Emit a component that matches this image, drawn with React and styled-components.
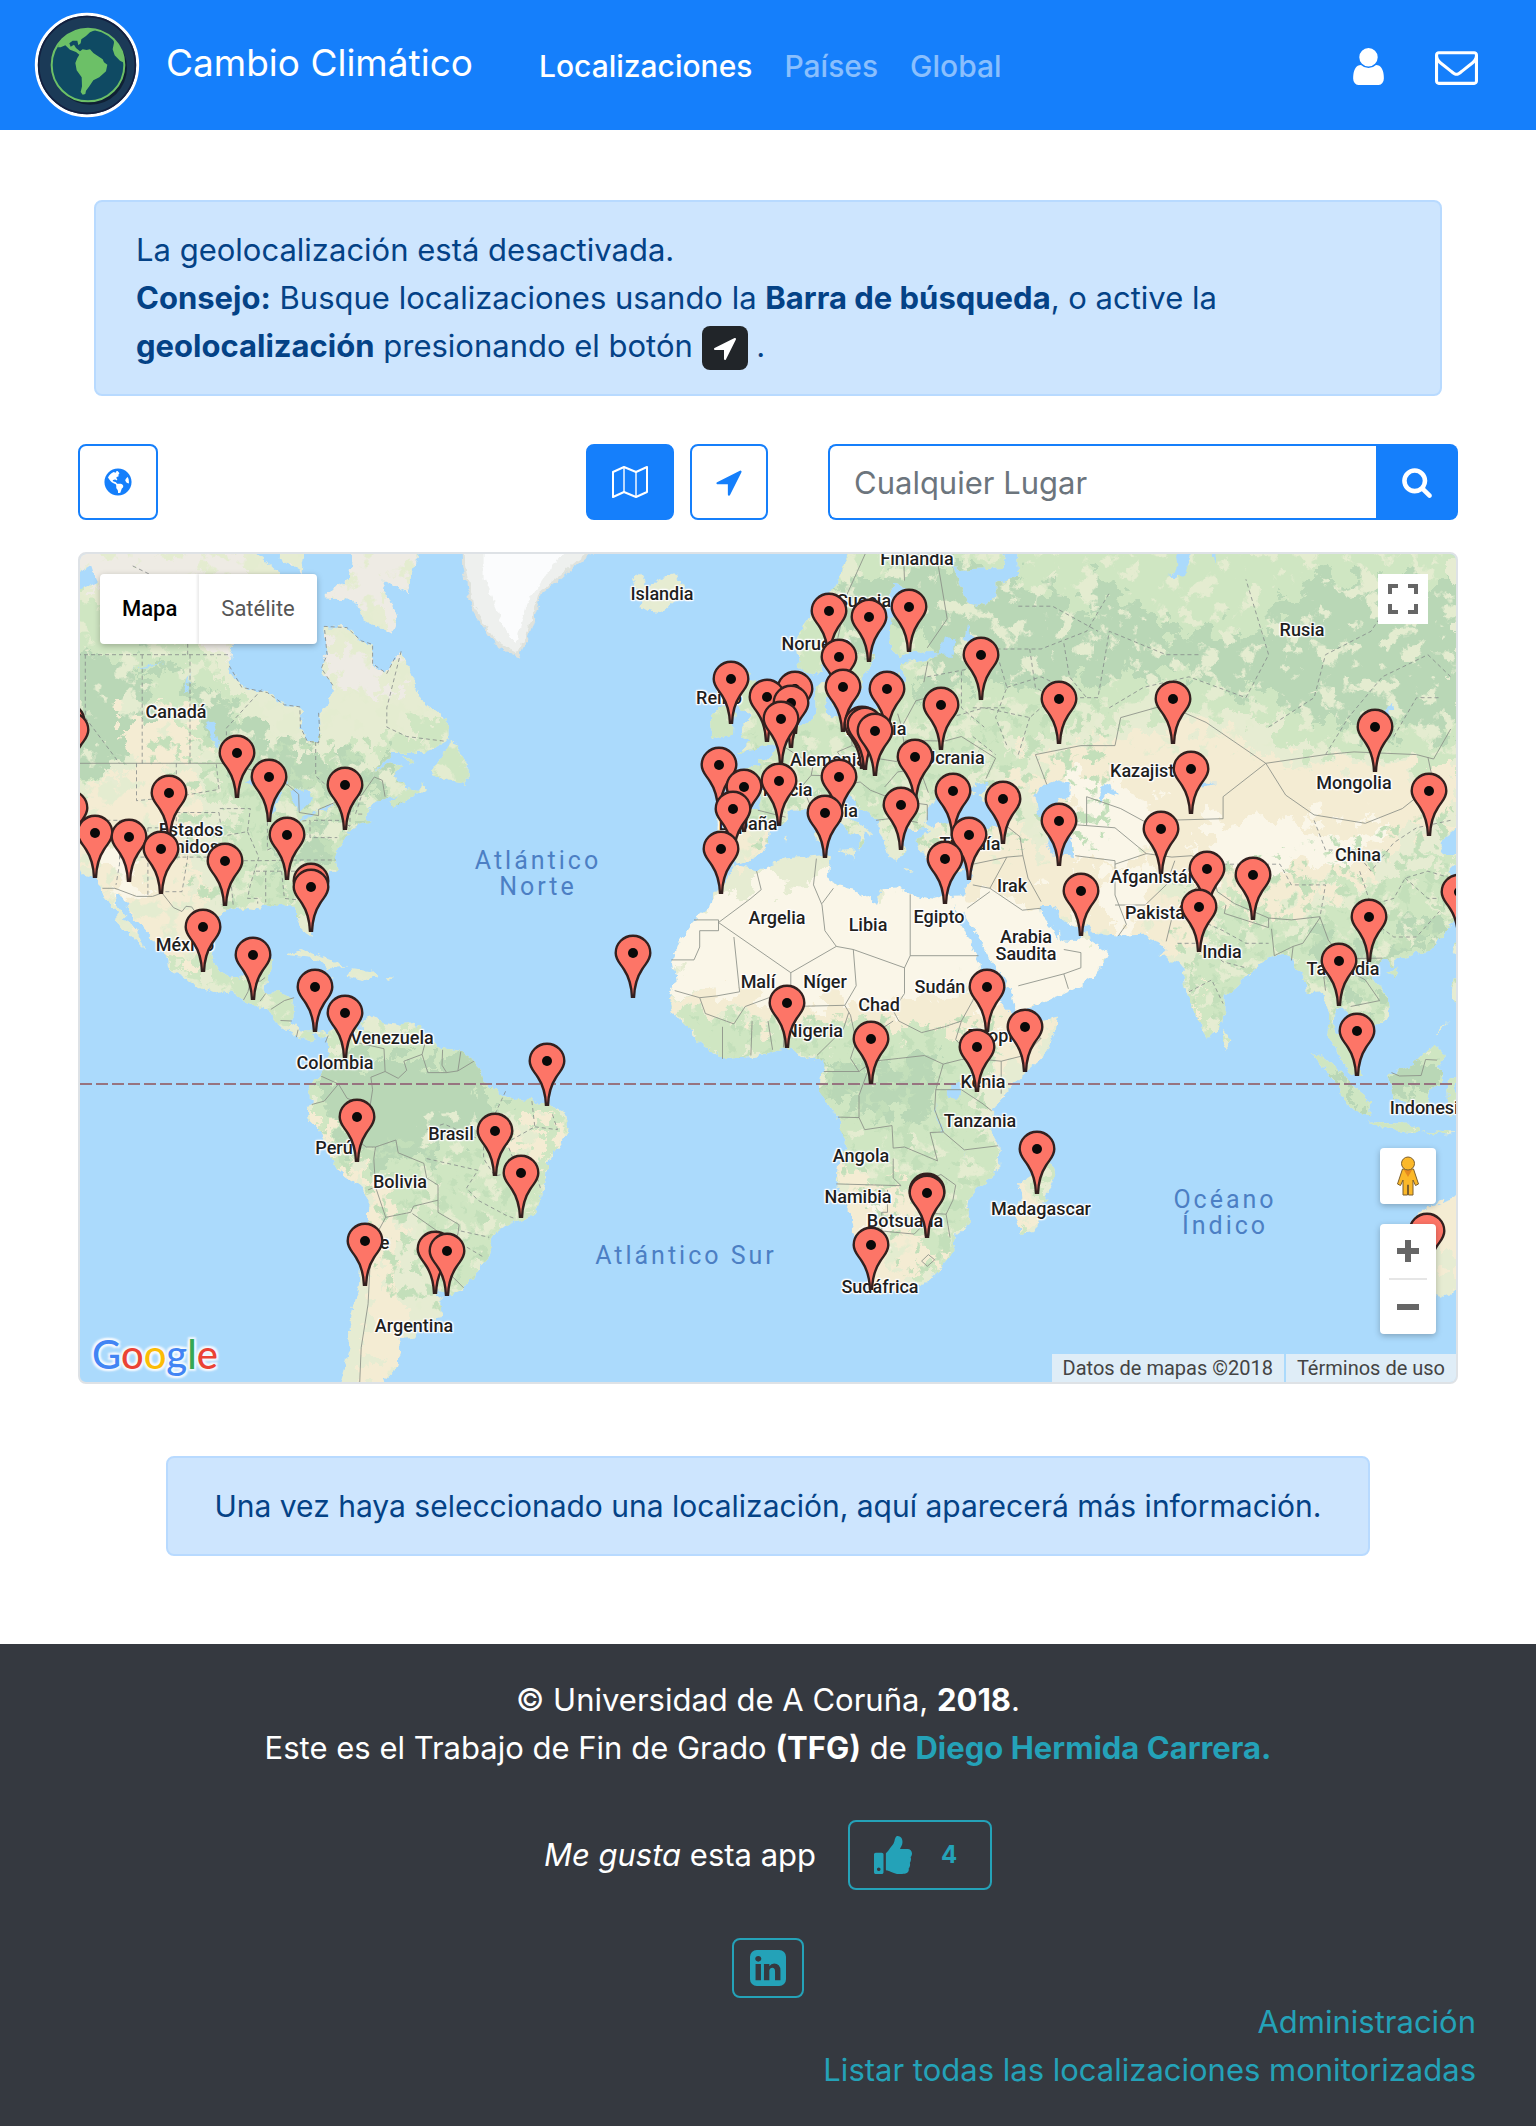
import React from "react";
import styled, { createGlobalStyle, css } from "styled-components";
import { FaGlobeAmericas, FaThumbsUp } from "react-icons/fa";

/* ---------- theme values ---------- */

const color = {
  primary: "#157ffb",
  info: "#24a2b8",
  dark: "#353940",
  ink: "#212529",
  alertBg: "#cde5fe",
  alertBorder: "#b8daff",
  alertText: "#044286",
  frame: "#dee2e6",
  muted: "#6c757d",
  water: "#abdafc",
};

const GlobalStyle = createGlobalStyle`
  *, *::before, *::after { box-sizing: border-box; }
  body {
    margin: 0;
    background: #fff;
    color: ${color.ink};
    font-family: Inter, "Liberation Sans", sans-serif;
    font-size: 31px;
    line-height: 48px;
  }
  button, input { font: inherit; }
  p { margin: 0; }
`;

/* ---------- icons ---------- */

const Glyph = styled.svg`
  display: block;
  flex: none;
  width: ${(p) => p.$size}px;
  height: ${(p) => p.$size}px;
  fill: currentColor;
`;

const Icon = ({ d, size }) => (
  <Glyph viewBox="0 0 1792 1792" $size={size} aria-hidden="true">
    <path d={d} />
  </Glyph>
);

const ICONS = {
  user: "M1536 1399q0 109-62.5 187t-150.5 78h-854q-88 0-150.5-78t-62.5-187q0-85 8.5-160.5t31.5-152 58.5-131 94-89 134.5-34.5q131 128 313 128t313-128q76 0 134.5 34.5t94 89 58.5 131 31.5 152 8.5 160.5zm-256-887q0 159-112.5 271.5t-271.5 112.5-271.5-112.5-112.5-271.5 112.5-271.5 271.5-112.5 271.5 112.5 112.5 271.5z",
  mail: "M1664 1504v-768q-32 36-69 66-268 206-426 338-51 43-83 67t-86.5 48.5-102.5 24.5h-2q-48 0-102.5-24.5t-86.5-48.5-83-67q-158-132-426-338-37-30-69-66v768q0 13 9.5 22.5t22.5 9.5h1472q13 0 22.5-9.5t9.5-22.5zm0-1051v-24.5l-.5-13-3-12.5-5.5-9-9-7.5-14-2.5h-1472q-13 0-22.5 9.5t-9.5 22.5q0 168 147 284 193 152 401 317 6 5 35 29.5t46 37.5 44.5 31.5 50.5 27.5 43 9h2q20 0 43-9t50.5-27.5 44.5-31.5 46-37.5 35-29.5q208-165 401-317 54-43 100.5-115.5t46.5-131.5zm128-37v1088q0 66-47 113t-113 47h-1472q-66 0-113-47t-47-113v-1088q0-66 47-113t113-47h1472q66 0 113 47t47 113z",
  arrow: "M1593 349l-640 1280q-17 35-57 35-5 0-15-2-22-5-35.5-22.5t-13.5-39.5v-576h-576q-22 0-39.5-13.5t-22.5-35.5 4-42 29-30l1280-640q13-7 29-7 27 0 45 19 15 14 18.5 34.5t-6.5 39.5z",
  search: "M1216 832q0-185-131.5-316.5t-316.5-131.5-316.5 131.5-131.5 316.5 131.5 316.5 316.5 131.5 316.5-131.5 131.5-316.5zm512 832q0 52-38 90t-90 38q-54 0-90-38l-343-342q-179 124-399 124-143 0-273.5-55.5t-225-150-150-225-55.5-273.5 55.5-273.5 150-225 225-150 273.5-55.5 273.5 55.5 225 150 150 225 55.5 273.5q0 220-124 399l343 343q37 37 37 90z",
  linkedin: "M365 1414h231v-694h-231v694zm246-908q-1-52-36-86t-93-34-94.5 34-36.5 86q0 51 35.5 85.5t92.5 34.5h1q59 0 95-34.5t36-85.5zm585 908h231v-398q0-154-73-233t-193-79q-136 0-209 117h2v-101h-231q3 66 0 694h231v-388q0-38 7-56 15-35 45-59.5t74-24.5q116 0 116 157v371zm468-998v960q0 119-84.5 203.5t-203.5 84.5h-960q-119 0-203.5-84.5t-84.5-203.5v-960q0-119 84.5-203.5t203.5-84.5h960q119 0 203.5 84.5t84.5 203.5z",
};

const LogoSvg = styled.svg`
  display: block;
  width: 106px;
  height: 106px;
`;

const Logo = () => (
  <LogoSvg viewBox="12 12 318 318" aria-hidden="true">
    <defs>
      <clipPath id="logo-globe"><circle cx="174" cy="171" r="109" /></clipPath>
    </defs>
    <circle cx="171" cy="171" r="152" fill="#1b3a57" stroke="#fff" strokeWidth="9" />
    <circle cx="171" cy="171" r="145" fill="none" stroke="#14203f" strokeWidth="5" />
    <circle cx="181" cy="180" r="110" fill="#0d1a2c" opacity="0.8" />
    <circle cx="174" cy="171" r="109" fill="#0f4a63" />
    <g clipPath="url(#logo-globe)" fill="#6cc067">
      <path d="M84 118L90 82L130 56L172 56L196 66L180 73L168 84L154 94L152 106L145 112L142 98L128 98L118 106L122 116L132 110L138 120L150 130L158 124L170 126L180 124L190 135L200 142L218 154L222 163L232 170L228 190L208 208L190 217L178 235L168 248L166 258L158 260L152 252L156 235L155 208L140 187L136 165L142 150L148 140L138 132L120 125L106 112L92 118Z" />
      <path d="M250 86L290 120L290 168L270 158L254 142L248 124L252 104Z" />
    </g>
    <circle cx="174" cy="171" r="109" fill="none" stroke="#6cc067" strokeWidth="6" />
  </LogoSvg>
);

const MapIconSvg = styled.svg`
  display: block;
  width: 38px;
  height: 32px;
`;

const MapIcon = () => (
  <MapIconSvg viewBox="0 0 38 32" fill="none" stroke="currentColor" strokeWidth="2" strokeLinejoin="round" aria-hidden="true">
    <path d="M2 6 L13 1 L25 6 L36 1 V26 L25 31 L13 26 L2 31 Z" />
    <path d="M13 1 V26 M25 6 V31" strokeWidth="1.4" />
  </MapIconSvg>
);

/* ---------- header ---------- */

const Header = styled.header`
  display: flex;
  align-items: center;
  height: 130px;
  padding: 0 58px 0 34px;
  background: ${color.primary};
  color: #fff;
`;

const Brand = styled.a`
  display: flex;
  align-items: center;
  gap: 26px;
  margin-right: 66px;
  color: inherit;
  font-size: 37px;
  line-height: 60px;
  text-decoration: none;

  span { padding-bottom: 4px; }
`;

const Nav = styled.nav`
  display: flex;
  flex: 1;
  gap: 32px;
  padding-top: 2px;
  font-size: 30px;
  font-weight: 500;
`;

const NavLink = styled.a`
  color: ${(p) => (p.$active ? "#fff" : "rgba(255, 255, 255, 0.5)")};
  text-decoration: none;
`;

const HeaderActions = styled.div`
  display: flex;
  align-items: center;
  gap: 45px;
  padding-top: 2px;
`;

const HeaderAction = styled.a`
  color: #fff;
`;

/* ---------- content ---------- */

const Main = styled.main`
  padding: 70px 78px 88px;
`;

const Alert = styled.div`
  margin: 0 16px 48px;
  padding: 24px 40px;
  border: 2px solid ${color.alertBorder};
  border-radius: 8px;
  background: ${color.alertBg};
  color: ${color.alertText};
  ${(p) => p.$narrow && css`
    margin: 72px 88px 0;
    font-size: 30px;
    text-align: center;
  `}
`;

const InlineBadge = styled.span`
  display: inline-flex;
  align-items: center;
  justify-content: center;
  width: 46px;
  height: 44px;
  border-radius: 8px;
  background: ${color.ink};
  color: #fff;
  vertical-align: bottom;
`;

const Toolbar = styled.div`
  display: grid;
  grid-template-columns: 1fr 1fr;
  margin-bottom: 32px;
`;

const ToolbarButtons = styled.div`
  display: flex;
  gap: 16px;
`;

const ToolButton = styled.button`
  display: flex;
  align-items: center;
  justify-content: center;
  width: ${(p) => p.$width}px;
  height: 76px;
  padding: 0;
  border: 2px solid ${color.primary};
  border-radius: 8px;
  background: ${(p) => (p.$filled ? color.primary : "#fff")};
  color: ${(p) => (p.$filled ? "#fff" : color.primary)};

  &:first-child { margin-right: auto; }
`;

const SearchForm = styled.form`
  display: flex;
  margin-left: 60px;
`;

const SearchInput = styled.input`
  flex: 1;
  min-width: 0;
  height: 76px;
  padding: 0 24px;
  border: 2px solid ${color.primary};
  border-right: 0;
  border-radius: 8px 0 0 8px;
  background: #fff;
  color: ${color.ink};

  &::placeholder { color: ${color.muted}; opacity: 1; }
`;

const SearchButton = styled.button`
  display: flex;
  align-items: center;
  justify-content: center;
  width: 82px;
  height: 76px;
  padding: 0;
  border: 0;
  border-radius: 0 8px 8px 0;
  background: ${color.primary};
  color: #fff;
`;

/* ---------- map geometry ---------- */

/* World-pixel window that the map shows. */
const VIEW = { left: 80, top: 554, width: 1376, height: 828 };

const project = (lon, lat) => {
  const y = Math.log(Math.tan(Math.PI / 4 + (lat * Math.PI) / 360));
  return [768 + 5.689 * lon, 1084 - 325.95 * y];
};

const trace = (text, closed) => {
  const points = text.trim().split(/\s+/).map((pair) => {
    const [x, y] = project(...pair.split(",").map(Number));
    return `${x.toFixed(1)} ${y.toFixed(1)}`;
  });
  return `M${points.join("L")}${closed ? "Z" : ""}`;
};
const shapes = (list) => list.map((t) => trace(t, true)).join("");
const lines = (list) => list.map((t) => trace(t, false)).join("");

const LAND = shapes([
  "-135,72 -96,72 -94,69 -86,66.5 -88,64 -93,62 -94.5,60 -94.7,58.8 -92.5,57 -88,56.5 -85,55.3 -82.3,55.1 -82.2,53 -81,51.5 -79,51.3 -78.8,52.5 -79,54.5 -77,55.7 -76.5,57.2 -78.5,58.8 -77.5,60 -78,62.4 -74,62.3 -71.5,61.2 -69.5,60.9 -69.5,59.2 -67,58.3 -65.5,59.8 -64.5,60.3 -62.5,58 -61.5,56.5 -60,55 -57.5,54.5 -56,52.8 -56,51.7 -59,50.6 -60.5,50.2 -66,50.2 -68,48.9 -70,47.2 -69,48 -66.5,49.1 -64.3,48.8 -65.5,47.8 -64.8,46.8 -63.5,45.9 -61.3,45.7 -60.6,47 -60,45.8 -63.5,44.6 -65.7,43.5 -66.2,44.4 -64.8,45.4 -67,44.9 -70,43.7 -70.8,42.5 -70,41.7 -72,41.2 -74,40.6 -74.2,39.5 -75.4,38 -76.2,36.9 -75.6,35.3 -77.5,34.3 -79,33.4 -81,32 -81.4,30.5 -80.6,28.3 -80.1,26.5 -80.5,25.2 -81.8,26 -82.8,27.8 -82.8,29.1 -84.2,30 -85.5,29.8 -88,30.3 -89.5,30.1 -89.3,29.1 -91.5,29.4 -94.5,29.5 -97.1,27.8 -97.4,25.8 -97.8,22.3 -96.5,19.6 -94.5,18.2 -91.8,18.5 -90.5,20.8 -87,21.5 -87.6,19.5 -88.3,18 -88.6,15.9 -86,15.9 -83.3,15 -83.6,12.5 -83.6,11 -82.2,9.2 -80,9.2 -78,9.4 -77.2,8.4 -78.3,8 -79.5,8.9 -80.3,7.5 -82.8,8.2 -83.7,8.7 -85.7,10 -87.5,12.8 -90,13.7 -92.3,14.5 -94.5,16.1 -96.6,15.7 -99.8,16.8 -102,18 -105,19.4 -105.5,20.6 -106,22.8 -109,25.6 -112,28.5 -113.2,31 -114.8,31.7 -114.6,30 -112.8,28 -111,26 -110,24 -109.5,23 -110.3,23.6 -112,25.3 -113.5,26.8 -115,27.8 -114.2,28.6 -116,30.5 -117.2,32.7 -118.5,34 -120.6,34.6 -122,37 -124,40 -130,50",
  "-77.2,8.6 -75.5,10.5 -73,11.3 -71.7,12.3 -71.4,10.8 -70,12 -68,10.8 -64.5,10.2 -62,10.7 -60.5,8.6 -57.5,6.3 -54,5.8 -51.7,4.2 -50.3,1.8 -50,0 -48.5,-1 -44.5,-2.6 -41.5,-2.9 -38.5,-3.7 -35.3,-5.2 -34.9,-8 -37,-11 -38.8,-13.5 -39.2,-17.5 -40.5,-21 -42,-22.9 -45,-23.5 -48.5,-26 -48.8,-28.5 -51,-31 -53.5,-34 -56,-34.9 -58.3,-34 -57.2,-35.5 -57.5,-38 -62,-38.9 -62.2,-40.8 -65,-41 -64.5,-42.5 -65.5,-44.8 -67.5,-46 -66,-49 -76,-50 -75.5,-47 -73.5,-42 -73.7,-39 -73,-37 -71.7,-33 -71.5,-29.5 -70.4,-25 -70.2,-20 -71.5,-17.7 -75.5,-15 -77.2,-12 -79,-8 -81,-6 -81,-4.3 -80,-3 -80.9,-1.5 -80,0.7 -78.8,1.6 -77.3,3.8 -77.4,6",
  "-5.9,35.8 -2,35.1 3,36.8 10,37.3 11,36.8 10.5,34.5 11,33.2 15,32.3 19,30.3 20,32.5 23,32.6 25,31.6 29,30.9 31.5,31.5 32.6,31.2 32.5,30 33.5,28 35.5,24 37.3,21 37.5,18.5 39.5,15.5 42.5,12.5 43.3,11.5 45,10.5 51.2,11.8 50.8,9.5 48,4.5 44,1 41.5,-2 39.5,-4.5 39,-7 40.5,-10.5 40.7,-15 37,-17.8 35,-20 35.5,-23.8 32.8,-25.8 32.5,-28.3 30,-31 27,-33.6 22,-34.1 20,-34.8 18.4,-34 18,-32 16.5,-28.6 14.7,-24 14.4,-22 12,-18 12.3,-14 13.7,-10.5 12.2,-6 9,-1.5 9.5,1 9.6,3.8 8.5,4.7 6,4.3 4,6.3 1,5.9 -2,4.8 -7.5,4.4 -12.5,7.5 -13.5,9.5 -16.7,12.4 -17.4,14.7 -16.2,18 -17,21 -15.8,24 -13,27.7 -10,29.8 -9.6,31.5 -6.8,34.1",
  "-9.3,38.7 -8.8,41.5 -9.2,43 -4,43.5 -1.7,43.4 -1.2,45.5 -2.5,47.4 -4.7,48.2 -1.6,48.7 -1.5,49.6 0.2,49.5 1.7,50.9 4,51.7 4.8,53.1 8,53.7 8.4,55 8.2,57 10.5,57.6 10,55 11,54 14,54.2 18.5,54.8 21,55.3 21.2,57.3 23,57.1 24.3,57.5 23.5,59.2 28,59.6 30,60 27,60.4 23,59.9 21.4,61 21.5,63 25.3,65 22,65.8 21,64.3 17.5,62 17.2,60.7 18.8,59.8 16.7,58 16,56.3 14.3,55.5 12.8,55.5 11.3,58.8 10.6,59.4 8,58 5.5,58.8 5,61.5 8.5,63.8 12,65.5 14,67.5 16,72 30,72 42,68 41,66.8 34,66.6 32.5,67.1 35,64.3 38,64 40,64.7 40,65.8 44,66.2 43.8,68 54,68.5 60,69 72,72 140,72 140,42 125,40 121.5,39 121,40.8 118,39 119,37.3 122.5,37.2 119.5,35 120.8,33 121.8,31 121.5,28.5 119,25.5 116.5,23 114,22.3 110.5,21.2 110,20.3 108,21.6 106.5,20 105.8,18.8 108.8,15.3 109.2,12 107,10.4 105,8.8 104.8,10.2 102.5,12 100.9,13.4 100,13 99.3,10 100.4,8 101.6,6.9 103.4,4.5 104.2,1.4 103.4,1.4 101.3,3 100.3,5.5 99,7.8 98.3,8.5 98.7,12 97.6,16 95.4,15.8 94.3,16 94.3,18.5 92,21.5 90.5,22.3 88,21.7 86.8,20.8 85,19.4 82.3,16.6 80.2,15.5 80.2,13 79.8,10.4 78.2,8.9 77.5,8.1 76.3,10 74.8,13 73.3,17 72.8,20.5 71,20.9 69,22.3 70,22.9 67.2,24.5 66.5,25.4 61.6,25.2 57.3,25.7 56.5,27 54,26.6 51.5,27.9 50,30 48,30 48.2,28.5 50,26.6 51,24.7 51.5,25.9 51.6,24.3 54,24.2 56.2,26 56.6,24.5 59.8,22.4 57.8,19 55,17 52,15.6 45,12.8 43.4,12.7 42.8,16 40.5,19.5 39,21.5 37,25 35,28 34.9,29.3 34.3,27.8 32.6,29.9 32.3,31.2 34.3,31.3 35.7,34 36,36.7 34,36.2 32.5,36.1 30.6,36.7 28,36.6 26.5,38.3 26.3,39.5 29,40.9 26,40.7 24,40.7 22.9,40.4 23,39.2 24,38 22.8,36.5 21.5,37 21,38.7 19.4,40.5 19.4,42 16,43.6 14.5,45.2 13.7,45.7 12.3,45.2 12.6,44 14,42.4 16,41.8 18.4,40 17,40.4 16.9,39 15.8,38 16,40 14,40.9 12.2,41.8 10.4,43 8.9,44.4 6.5,43.2 3.5,43.3 3.1,41.9 0.3,40.3 -0.2,38.7 -2,36.8 -5.5,36.1 -6.4,37 -9,37",
  "-24,65.5 -22.5,66.4 -21,65.5 -18.5,66.1 -16,66.4 -14.5,65 -18.7,63.4 -22.6,63.9 -22,64.8",
  "-5.5,50.1 -3,50.7 1.3,51.2 1.7,52.7 0.2,53.2 -1.5,55 -3,56 -2,57.6 -4,57.7 -3.2,58.6 -5,58.5 -6,56.5 -4.8,54.8 -3,54 -4.5,53 -5,51.8 -3,51.4",
  "-6,52.2 -9.8,51.6 -10,54 -8,55.3 -5.7,54.5",
  "-66,72 -61.5,68 -62,66.8 -63.5,65 -68,66 -65,63 -66,61.8 -71,63 -73,64.5 -78,64.6 -76,65.5 -73.5,66 -73,68 -80,72",
  "-87,65.5 -81,64 -84,63 -87,63.7", "-83,72 -86,67.5 -82,66.5 -81,69",
  "-59.3,47.7 -57,50 -55.5,51.5 -53,49 -53,46.7 -56,47", "-64.4,49.9 -61.8,49.3 -63,49.1",
  "-84.8,22 -82,23.1 -77,21.5 -74.3,20.2 -77.5,19.9 -78.5,21.3", "-74.3,18.4 -73,19.9 -69.8,19.6 -68.5,18.5 -71.5,17.8",
  "-78.2,18.4 -76.3,18.1 -77.5,17.8", "-67.2,18.5 -65.7,18.4 -66.8,18",
  "12.5,38 15.5,38.2 15,36.8", "8.4,40.8 9.6,40.9 9.5,39.2 8.6,39", "8.7,42.5 9.4,42.9 9.3,41.5", "23.6,35.5 26.2,35.2 24.5,35", "32.4,35 34.4,35.6 33.6,34.7", "2.5,39.6 3.3,39.8 3,39.3",
  "11.2,55.6 12.5,56 12.2,55.1", "18.3,57.6 19,57.8 18.4,57", "22,58.4 23.2,58.5 22.5,58",
  "49.3,-12 50.5,-15.6 49.5,-18 47,-25 44.5,-25.3 43.4,-22.5 44.4,-19.8 44,-17 47,-15.3",
  "79.9,9.5 81.8,7.5 80.6,6 79.8,7",
  "95.4,5.6 98,4.6 100.5,2.3 103.5,-1 106,-3 105.8,-5.8 102,-4 98.8,1.6",
  "105.2,-6.8 108.5,-6.7 112.5,-6.8 114.5,-7.8 114,-8.6 109,-7.7", "115,-8.1 119,-8.5 122,-8.4 119,-9",
  "109,1.5 111.5,2.7 113.5,3.5 117,7 119,5 117.7,3 118.8,1 116.5,-1.5 116,-4 112,-3.4 110.2,-2.5", "119.2,0 120,1.2 124,1 120.5,0 122,-4 119.5,-5.5",
  "108.7,19.3 110.9,20 110,18.4", "120.1,23 121.6,25.2 121,22", "117.2,8.3 119.5,11.2 118.5,9.5", "120,16 120.6,18.4 122.5,18.4 122,14 120.6,13.8",
  "113.7,-22.5 114.2,-26.5 115.7,-32 115.1,-34.3 118,-35 121,-34 125,-33 125,-17 122,-17 121,-19.5 117,-20.7",
]);

const GREENLAND = shapes(["-54,72 -53.5,67 -52,64 -48,61 -44,60 -42.5,61.5 -40,65 -34,67 -30,68.2 -25,69 -25,72"]);
const ICE_SHEET = shapes(["-50,72 -50,66 -46,62 -44.3,61 -42.5,64 -38,67 -32,69 -32,72"]);

const LAKES = shapes([
  "28,41.5 27.8,43 30,45.3 31.5,46.5 33,46 32.7,45.3 34,44.4 36.5,45.2 35,46.2 38.8,47 38,45.5 37,45 39,44 41.5,42.2 41.3,41.3 38,41 35,42 32,41.6 29,41.2",
  "47,45 48,46.2 51,47 53,46.5 53,45 51,44.5 50.5,44 53,42 52.8,40.5 53.8,37 50,37.4 48.9,38.4 49.5,40.4 47.6,42.8",
  "58.3,44 58.5,46 60.5,46.6 61.3,45 59.5,45.5", "74,45 75,46.7 79,46.7 75,46.2",
  "103.7,51.6 106,52.2 109,53.4 109.8,55.6 108,54 105,52.2",
  "30,60 31,61.5 33,61.2 32.5,60", "34.5,61.3 35,62.6 36.3,61.2",
  "-92,46.7 -88.5,48.7 -85,47.5 -84.5,46.6 -88,46.8", "-87.7,42 -87.5,44.5 -85.5,45.8 -86.4,43.5", "-84,45.8 -81,45.9 -80,44.7 -82.3,43.1 -83.5,44.6", "-83.2,41.6 -79,42.9 -81,42.7", "-79.6,43.3 -76.3,44.1 -77,43.4",
  "-99,53.5 -97.5,53.8 -96.5,50.6 -97.2,51", "-117,61 -112,62.6 -109.5,62.7 -113,61.2", "-123,66 -119,67 -118,65.8 -121,65.2",
  "-111.5,58.7 -106,59.3 -109,58.8", "-102.5,56.5 -101.5,58.4 -101.8,56.8",
  "31.8,-0.8 33.5,0.4 34.2,-0.5 33,-2.6 31.8,-2.4", "29.2,-3.4 30.9,-8.7 30,-7", "34,-9.6 35,-14 34.5,-12",
  "71.5,69 72,66.5 70,66.3 73,66.1 74.5,68 73.5,70", "78,69 78.6,67 79.2,69",
  "-72.2,10.8 -71.3,11 -71.2,9.3 -72,9.2",
]);

/* Vegetation zones, from the palest to the densest. */
const ZONES = [
  { fill: "#eeebe4", list: ["-122,69 -122,66 -105,64 -94,59.5 -80,62 -80,70", "-80,63 -78,57 -70,56 -61,58 -66,64", "-95,72 -60,72 -62,60 -90,62"] },
  { fill: "#cfe6c2", list: [
    "-135,66 -112,64 -96,58 -88,52 -80,49 -66,52 -54,55 -50,45 -66,40 -72,40 -75,34 -82,28 -86,29 -95,29 -95,40 -98,49 -106,54 -116,49 -124,40 -135,50",
    "-80,12 -50,8 -34,-5 -38,-18 -44,-25 -52,-34 -60,-35 -62,-24 -70,-18 -74,-14 -82,-5", "-106,22 -98,16 -88,12 -80,6 -76,9 -86,22 -92,18 -98,24",
    "-20,13 -5,11 12,10 30,9 40,10 38,2 36,-6 42,-16 34,-28 28,-34 25,-30 28,-20 12,-17 8,-2 8,5 -10,4",
    "-12,62 -12,43 5,42 10,46 20,40 30,45 38,48 50,52 56,54 70,54 86,54 95,50 112,49 122,46 122,70 0,70",
    "72,34 90,28 96,28 104,34 122,36 122,20 108,8 98,8 92,20 86,18 80,8 74,10 72,20 80,26",
    "94,8 122,8 122,-10 94,-10", "48,-11 52,-16 48,-26 46,-24 48,-16",
  ] },
  { fill: "#b9d7b6", list: [
    "-125,60 -112,60 -106,55 -112,52 -118,47 -124,46 -135,55", "-112,60 -100,56 -97,51 -90,47 -84,46 -72,44 -66,44 -64,46 -70,50 -80,50 -92,54 -104,59",
    "-84,38 -78,42 -70,46 -68,45 -75,40 -82,34", "-78,4 -66,5 -52,4 -50,0 -50,-6 -56,-10 -66,-14 -72,-13 -78,-6", "-58,-2 -46,-3 -48,-8 -56,-9",
    "9,4 14,4 30,4 30,-4 24,-6 16,-4 9,-3", "10,66 20,66 28,68 44,66 60,64 62,58 50,56 36,58 26,56 28,62 22,62 14,60",
    "58,66 72,62 88,62 96,66 122,66 122,52 108,53 96,53 88,56 72,58 62,58", "96,28 102,22 108,24 118,30 120,26 108,21 100,18 94,22",
    "96,5 106,-4 104,-6 98,1", "109,2 118,6 118,1 115,-3 110,-2", "98,18 104,16 108,13 106,11 100,15",
  ] },
  { fill: "#f4ecd3", list: [
    "-117,47 -106,50 -100,46 -101,36 -99,28 -99,22 -104,21 -112,27 -120,35 -121,42", "-114,54 -104,55 -98,50 -112,49",
    "-82,-4 -78,-6 -72,-16 -67,-18 -65,-26 -67,-34 -62,-38 -62,-42 -72,-50 -70,-38 -70,-26 -72,-18", "-44,-6 -38,-7 -40,-14 -44,-14",
    "44,50 58,52 78,53 86,50 98,49 112,48 122,48 122,44 110,38 104,34 92,28 80,30 72,34 66,38 52,42 46,44", "26,40 44,41 50,38 60,38 72,36 72,24 68,23 56,26 34,28 34,35 28,37",
    "70,30 78,30 77,22 74,17 78,10 76,11 74,20 70,22", "-10,42 -1,42 -1,37 -8,37", "-18,16 40,16 52,12 42,2 38,0 40,9 30,9 0,11 -18,13", "12,-14 22,-17 28,-22 27,-33 17,-35 11,-20",
    "43,-16 46,-16 46,-26 43,-26", "112,-20 126,-16 126,-33 120,-32",
  ] },
  { fill: "#faf6e8", list: [
    "-18,17 -18,28 -10,31 -2,33 10,34 33,33 40,31 48,31 54,25 62,23 56,15 44,11 42,12 36,17 20,14 0,15", "52,48 66,46 70,42 64,36 54,37", "58,35 66,35 66,26 58,27", "76,41 92,43 100,41 108,42 106,37 96,36 86,34 78,35",
    "-116,38 -112,38 -109,32 -115,32", "20,-20 24,-23 20,-29 17,-26",
  ] },
];

/* Scattered clearings and woods over the zones. */
const SPECKLE_LIGHT = shapes(["-135,70 -50,70 -50,8 -135,8", "-12,70 122,70 122,50 -12,50", "-12,50 50,50 50,36 -12,36", "-62,-5 -34,-5 -40,-40 -62,-40", "14,-8 42,-8 36,-34 22,-34", "66,34 122,34 122,8 66,8"]);
const SPECKLE_GREEN = shapes(["-110,52 -70,52 -70,28 -102,28", "-10,52 60,56 60,38 -10,38", "-80,-8 -44,-12 -50,-38 -66,-36", "-14,12 40,12 36,-30 24,-32 12,-14", "70,34 122,44 122,10 72,10"]);

const BORDERS = lines([
  "-135,49 -95.2,49 -89.5,48 -84.5,46.5 -82.5,45.3 -82.4,43 -79,42.6 -79,43.4 -76.4,44.2 -74.7,45 -71.4,45.2 -69.2,47.4 -67.8,47 -67.3,45",
  "-117,32.5 -114.8,32.5 -111,31.3 -108.2,31.3 -106.5,31.8 -104.5,29.6 -103,29 -102.3,29.8 -101.3,29.7 -99.4,27.3 -97.3,25.9",
  "-92.2,14.6 -91.4,16 -91,17.8 -89.2,17.8 -88.4,18.4", "-89.3,14.4 -88.3,15.7", "-87.4,13 -85,14.5 -83.3,15", "-85.7,11.1 -83.7,11", "-82.9,8.2 -82.6,9.5",
  "-77.3,8.5 -77.8,7.3", "-71.3,11.8 -73,9.2 -72,7.2 -67.5,6.2 -67.3,2.2 -69.8,1.2 -69.5,-1 -70,-4.2 -74,-2.5 -75.5,0 -78.6,1.4", "-75.5,0 -78,-3 -80.2,-3.6",
  "-67.3,2.2 -65,1 -63.5,2.4 -64,4 -60.8,5.2 -60,8.2", "-60.8,5.2 -59.8,2 -56.5,2 -54.5,2.3 -51.7,4", "-57.2,6 -57.3,3.3 -56.5,2", "-54,5.7 -54.5,2.3",
  "-70,-4.2 -73.2,-6 -73.8,-7.5 -72.8,-9.5 -70.6,-11 -69,-11 -65.4,-9.8 -65,-12 -60.5,-13.8 -60,-16.3 -58,-17.5 -58,-20 -62.3,-21 -62.8,-22 -67.2,-22.8 -69,-17.8 -69.3,-13 -69,-11",
  "-70.3,-18.3 -69,-17.8", "-67.2,-22.8 -68.5,-25 -70,-31 -70.3,-36 -71.5,-42 -71.8,-47", "-62.5,-22.2 -57.7,-25.3 -58.6,-27.3 -55.8,-27.4 -54.5,-25.5 -54.3,-24 -58,-22 -58,-20", "-55.8,-27.4 -53.8,-27.1 -57.6,-30.2 -58.2,-33.5", "-57.6,-30.2 -53.5,-33.7",
  "-13,27.7 -8.7,27.7 -8.7,26 -12,26 -12,23.4 -13,21.3 -17,21.3", "-8.7,27.3 -3,31 -1.2,32.3 -2,35", "-8.7,27.3 4,19.2 12,23.5 10,26 9.5,30 8,33 8.5,36.8", "9.5,30.2 11.5,32.5", "-6,25 -5,16 -9,15.3 -12,15 -16.4,16.2", "4,19.2 4,16.5 0.2,15 -4,13.5 -6,10.5 -11,12.3 -12,15",
  "12,23.5 15,23 24,20 25,22 25,31.6", "25,22 37,22", "15,23 15.5,17 13.5,13.7 4,13.5 3.6,11.8 1,15", "24,20 24,15.7 22,12.8 23,11 27,9 31,10 34,11 36,14.5 37,17.5 38.6,18", "13.5,13.7 14.5,12 15.5,7.5 14.5,4.5 16,2.2 9.8,2.2", "3,12 2.7,6.4", "8.6,5 13.2,9.5 14.2,12.5", "15.5,7.5 19,9 22,11", "16,2.2 18.5,4 23,4.5 27.5,5 30.8,3.5 34,4.3 36,4.5 33,7.8 34,11", "36,4.5 41,4 45,5 48,8 44,9 42.8,11", "41,4 41,-1.7", "30.8,3.5 29.5,-1 29.3,-4.5 30.8,-8.4 28.5,-8.5 29.8,-13.4 24,-11 22,-11.2 21.8,-7.3 17,-8 16,-5.9 12.3,-5.8",
  "29.5,-1 34,-1 37.8,-3.5 39.3,-4.7", "30.8,-8.4 34.5,-11.5 40.4,-10.8", "22,-13 22,-16.3 23.4,-17.6 12,-17.3", "21,-18.3 21,-22 20,-22 20,-28.5 16.6,-28.6", "20,-25 25.7,-25.5 29.3,-22.2 31.3,-22.3 32,-26", "25.3,-17.8 29.3,-22.2", "25.3,-17.8 30.4,-15.7 33,-17.5 32.5,-20 31.3,-22.3", "16,-5.9 16,-2 18,3.5", "-8,4.4 -8,10", "-3,5 -2.8,11", "0.8,6 0,11",
  "27,-29.7 28.2,-28.7 29.3,-29.5 28,-30.5 27,-29.7",
  "-8.8,42 -6.5,41.6 -7.3,37.2", "-1.8,43.3 3.1,42.4", "2.5,51 6.2,49.5 8,49 7.6,47.6 6,46.3 7.5,43.8", "7.6,47.6 13,47.5 13.8,48.8 12.2,50.3 14.8,51 14.2,54", "14.8,51 18.8,49.6 22.6,49.2 24,50.8 23.5,53 22.8,54.4", "13.6,46.5 16.2,46.8 18,45.8 22.7,44.5 28,44 28,42", "20.5,46.2 22.8,48 26.7,48.3 28.2,45.5", "19,42 22.5,42.3 26.3,41.7", "24,51.6 31,51.5 34,52 40,49.6 38.3,47.2", "28,56 31,52.2", "27.4,57.5 28.1,59.4", "11,59.2 12.3,61.5 14,65 18,68.5", "24,65.9 23.8,68", "28,60.6 31.5,63 29,69", "23.5,53 26,55.7 28,56",
  "36,36 42,37 44.8,37.2 44.3,39.8 41.5,41.5", "36,33 39,32.5 42,37", "39,32.5 44.7,29.2 48,29.5", "35,29.5 39,32", "44.8,37.2 45.7,34 48,30.5", "44,17 52,19 55,20 55,22.5 52,23", "52,19 52.8,16.5", "54,37.2 61,36.5 61,31.5 63,27 61.6,25.2", "61,36 66.5,37.5 71,37 74.5,37.2", "61,30 66.3,30 70,33 71.5,36.5", "56,41.3 56,45 62,43.5 66,41.9 70,42 80,42.2 80,45 87.5,49", "52.5,41.5 56,41.3 61,41 66.5,37.5", "49,46.5 47,50 55,51 61,51 62,54 70,55.3 77,53.5 87.5,49 98,50 103,50.3 114,50 117,49.5 120,52.8", "87.5,49 91,45.2 96,42.7 105,41.6 111.5,43.5 117,46.6 116,49.7", "74.5,37.2 78,35.3 79,32 82,30.2 88,28 92,27.7 97,28.2 98.5,24.5 101,21.5 108,21.6", "70,24.3 71,28 75,32.3 78,35", "80.5,30 80.2,28.7 88,26.5 88,28", "88.5,26.3 89,22 92.3,23.5 92,21.2", "92.3,23.5 94,24 97,28", "98,16.2 97.7,18.5 101,20 105,18 107.5,14.5 102.4,13.5", "109.6,2 111,1.4 114.8,1.5 115.6,4.3 117.6,4.2",
]);

const PROVINCES = lines([
  "-135,60 -94.8,60", "-120,60 -120,54 -114,49", "-110,60 -110,49", "-101.6,60 -101.6,49", "-95.2,49 -95.2,52.9 -89,56.8", "-79.5,51.4 -79.5,47.5 -76,45.4", "-57,51.5 -63.5,52 -67,53 -67,55 -64.5,60.3", "-102,60 -102,65 -112,67",
  "-94.7,59 -92.5,57 -88,56.5 -85,55.3 -82.3,55.1 -82.2,53 -81,51.5 -79,51.3 -78.8,52.5 -79,54.5", "-76.5,57.2 -78.5,58.8 -77.5,60 -78,62.4 -74,62.3 -71.5,61.2 -69.5,60.9 -69.5,59.2 -67,58.3 -65.5,59.8",
  "-111,49 -111,44.5 -104,45 -104,41 -111,41 -111,42 -120,42", "-104,49 -104,45 -96.5,45.9 -97,49", "-114,42 -114,36 -114.6,33", "-109,41 -109,31.4", "-114,37 -102,37 -94.6,37 -94.4,33.5 -94,30", "-102,41 -102,37 -103,32 -106.5,32", "-104,43 -96.5,43 -96,40 -102,40", "-95,40 -91.5,40.5 -91,43.5 -96.5,43.5", "-91.5,40.5 -89.5,37 -91,33 -91.5,31 -89.7,31 -89.7,30.2", "-94.6,36.5 -89.5,36.5 -81.7,36.6 -76,36.6", "-88,41.8 -88,38 -84.8,39.2 -84.8,41.7 -80.5,42", "-88.3,35 -88.3,30.4", "-85.5,35 -85,31 -82,30.7", "-90,35 -83,35 -81,32.2", "-80.5,42 -80.5,39.7 -75.7,39.7", "-79.8,42 -75.3,42 -73.5,41.2 -73.4,45", "-71.5,45 -72.5,42.8 -71,42.8",
  "-60,-8 -57,-7 -50,-10 -48,-5.3 -46,-1", "-60,-13 -51,-15 -53,-18 -51,-20 -46,-22.5 -44.5,-23", "-46,-10 -44,-15 -48,-16 -50,-13 -50,-10", "-41.5,-3 -41,-7.5 -45.5,-10", "-41,-7.5 -37,-8 -38,-5", "-40,-18 -41,-15 -44,-14.5", "-54,-25 -49,-26", "-54,-27 -49.8,-29.2",
  "28,58 36,58.8 40,60.5 48,60.5 56,62 60,65", "32,54 38,55 46,54 50,56 58,56 60,62 70,60 76,60", "60,55 66,57 74,58 84,56 88,60 84,66", "88,53 96,56 98,60 106,62 112,66", "98,50 102,54 108,58 116,60 120,58", "110,52 114,56 118,56", "44,50 46,54", "36,52 40,50",
  "34,58.5 34,55 38,53", "40,60.5 42,57 40,54 42,51", "46,60.5 47,57 50,56", "52,61 53,58 56,56", "42,57 48,58 52,57", "36,55 42,55", "44,64 50,64 58,62",
  "80,36 90,36 92,33 98,33 97,28", "96,42 98,38 103,38 106,35 110,39 114,41 120,42", "104,35 106,30 110,31 112,34 116,35 120,34", "103,27 107,27 110,25 114,25 118,29", "112,34 116,31 118,31", "72,24 76,24 80,21 84,20", "75,28 80,26 84,24 88,24", "74,16 78,18 80,14",
]);

const LABELS = [
  ["Canadá", 176, 711], ["Islandia", 662, 593], ["Estados\nUnidos", 191, 838], ["Reino", 719, 697], ["México", 185, 944], ["Venezuela", 392, 1037],
  ["Colombia", 335, 1062], ["Perú", 334, 1147], ["Bolivia", 400, 1181], ["Brasil", 451, 1133], ["Chile", 369, 1242], ["Argentina", 414, 1325],
  ["Noruega", 816, 643], ["Finlandia", 917, 558], ["Suecia", 864, 600], ["Rusia", 1302, 629], ["Polonia", 876, 728], ["Alemania", 828, 759],
  ["Ucrania", 954, 757], ["Francia", 783, 789], ["Italia", 838, 810], ["España", 748, 823], ["Turquía", 970, 843], ["Kazajistán", 1152, 770],
  ["Mongolia", 1354, 782], ["China", 1358, 854], ["Afganistán", 1154, 876], ["Pakistán", 1160, 912], ["Irak", 1012, 885], ["Argelia", 777, 917],
  ["Libia", 868, 924], ["Egipto", 939, 916], ["Arabia\nSaudita", 1026, 945], ["Malí", 758, 981], ["Níger", 825, 981], ["Chad", 879, 1004],
  ["Sudán", 940, 986], ["Nigeria", 814, 1030], ["Etiopía", 995, 1035], ["Kenia", 983, 1081], ["Tanzania", 980, 1120], ["Angola", 861, 1155],
  ["Namibia", 858, 1196], ["Botsuana", 905, 1220], ["Madagascar", 1041, 1208], ["Sudáfrica", 880, 1286], ["India", 1222, 951],
  ["Tailandia", 1343, 968], ["Indonesia", 1429, 1107],
];

const OCEANS = [
  ["Atlántico\nNorte", 538, 874], ["Atlántico Sur", 686, 1256], ["Océano\nÍndico", 1225, 1213],
];

const PINS = [
  [67, 766], [71, 775], [70, 853], [237, 798], [269, 822], [345, 830], [169, 838], [95, 878], [129, 882], [161, 894], [225, 906], [287, 880],
  [311, 926], [311, 932], [203, 972], [253, 1000], [315, 1032], [345, 1058], [633, 998], [547, 1106], [357, 1162], [495, 1176], [521, 1218],
  [365, 1286], [435, 1294], [447, 1296], [787, 1048], [731, 724], [767, 742], [795, 734], [791, 748], [781, 764], [719, 810], [744, 832],
  [733, 854], [779, 826], [721, 894], [829, 656], [869, 662], [909, 652], [839, 702], [981, 700], [843, 732], [887, 734], [941, 750],
  [1059, 744], [1173, 744], [1375, 772], [862, 769], [865, 770], [875, 776], [915, 802], [839, 822], [825, 858], [901, 850], [953, 836],
  [1003, 844], [969, 880], [945, 904], [1059, 866], [1191, 814], [1161, 874], [1429, 836], [1207, 914], [1253, 920], [1081, 936],
  [1199, 952], [1369, 962], [1459, 937], [1339, 1006], [1357, 1076], [987, 1032], [1025, 1072], [977, 1092], [871, 1084], [1037, 1194],
  [927, 1236], [927, 1238], [871, 1290], [1427, 1276],
].sort((a, b) => a[1] - b[1]);

/* ---------- map parts ---------- */

const MapFrame = styled.section`
  position: relative;
  height: 832px;
  overflow: hidden;
  border: 2px solid ${color.frame};
  border-radius: 8px;
  background: ${color.water};
  font-family: Roboto, "Liberation Sans", sans-serif;
`;

const MapCanvas = styled.div`
  position: absolute;
  top: 0;
  left: 50%;
  width: ${VIEW.width}px;
  height: ${VIEW.height}px;
  margin-left: -${VIEW.width / 2}px;
`;

const MapSvg = styled.svg`
  display: block;
  width: 100%;
  height: 100%;
`;

const MapLabel = styled.span`
  position: absolute;
  transform: translate(-50%, -50%);
  color: ${(p) => (p.$ocean ? "#4c7fc4" : "#1f1f1f")};
  font-size: ${(p) => (p.$ocean ? 25 : 18)}px;
  font-weight: ${(p) => (p.$ocean ? 400 : 500)};
  line-height: ${(p) => (p.$ocean ? 26 : 17)}px;
  letter-spacing: ${(p) => (p.$ocean ? "3px" : "normal")};
  text-align: center;
  white-space: pre;
  ${(p) => !p.$ocean && css`
    text-shadow: 0 0 3px #fff, 0 0 3px #fff, 1px 1px 1px #fff, -1px -1px 1px #fff, 1px -1px 1px #fff, -1px 1px 1px #fff;
  `}
`;

const Pin = styled.button`
  position: absolute;
  width: 40px;
  height: 64px;
  margin: -64px 0 0 -20px;
  padding: 0;
  border: 0;
  background: none;

  svg { display: block; }
`;

const place = (x, y) => ({ left: x - VIEW.left, top: y - VIEW.top });

const Terrain = () => (
  <MapSvg viewBox={`${VIEW.left} ${VIEW.top} ${VIEW.width} ${VIEW.height}`} aria-hidden="true">
    <defs>
      <clipPath id="land"><path d={LAND} /></clipPath>
      <filter id="coast" filterUnits="userSpaceOnUse" x="60" y="534" width="1416" height="868">
        <feTurbulence type="fractalNoise" baseFrequency="0.11" numOctaves="3" seed="4" result="n" />
        <feDisplacementMap in="SourceGraphic" in2="n" scale="9" xChannelSelector="R" yChannelSelector="G" />
      </filter>
      <filter id="zone" filterUnits="userSpaceOnUse" x="60" y="534" width="1416" height="868">
        <feTurbulence type="fractalNoise" baseFrequency="0.045" numOctaves="4" seed="9" result="n" />
        <feDisplacementMap in="SourceGraphic" in2="n" scale="70" xChannelSelector="R" yChannelSelector="G" />
      </filter>
      <filter id="speckle" filterUnits="userSpaceOnUse" x="60" y="534" width="1416" height="868">
        <feTurbulence type="fractalNoise" baseFrequency="0.05" numOctaves="4" seed="21" />
        <feColorMatrix values="0 0 0 0 0  0 0 0 0 0  0 0 0 0 0  14 0 0 0 -8" result="m" />
        <feComposite in="SourceGraphic" in2="m" operator="in" />
      </filter>
      <filter id="speckle-fine" filterUnits="userSpaceOnUse" x="60" y="534" width="1416" height="868">
        <feTurbulence type="fractalNoise" baseFrequency="0.08" numOctaves="3" seed="33" />
        <feColorMatrix values="0 0 0 0 0  0 0 0 0 0  0 0 0 0 0  0 14 0 0 -8" result="m" />
        <feComposite in="SourceGraphic" in2="m" operator="in" />
      </filter>
    </defs>
    <g filter="url(#coast)">
      <path d={LAND} fill="#e6ecd2" />
      <g clipPath="url(#land)">
        <g filter="url(#zone)">
          {ZONES.map((zone) => <path key={zone.fill} d={shapes(zone.list)} fill={zone.fill} />)}
        </g>
        <path d={SPECKLE_LIGHT} fill="#e4ecd0" filter="url(#speckle)" />
        <path d={SPECKLE_GREEN} fill="#c3dfba" filter="url(#speckle-fine)" />
      </g>
      <path d={GREENLAND} fill="#eef0ee" stroke="#dfe2dc" strokeWidth="3" />
      <path d={ICE_SHEET} fill="#fbfcfd" />
      <path d={LAKES} fill={color.water} />
    </g>
    <path d={BORDERS} fill="none" stroke="#8b8f87" strokeWidth="1" strokeLinejoin="round" opacity="0.85" />
    <path d={PROVINCES} fill="none" stroke="#85898a" strokeWidth="1" strokeDasharray="4 3" opacity="0.8" />
    <path d="M80 1084H1456" stroke="#977480" strokeWidth="2" strokeDasharray="12 4" />
  </MapSvg>
);

const PinSvg = () => (
  <svg width="40" height="64" viewBox="0 0 40 64" aria-hidden="true">
    <path d="M19 63.500 C18.500 50 16 43 11 35.500 C7 29 2.700 26 2.700 19 A17.300 17.300 0 0 1 37.300 19 C37.300 26 33 29 29 35.500 C24 43 21.500 50 21 63.500 Z" fill="#fd7567" stroke="#33201f" strokeWidth="2.4" strokeLinejoin="round" />
    <circle cx="20" cy="19" r="5" fill="#0a0a0a" />
  </svg>
);

const MapTypes = styled.div`
  position: absolute;
  top: 20px;
  left: 20px;
  display: flex;
  border-radius: 4px;
  background: #fff;
  box-shadow: 0 2px 6px rgba(0, 0, 0, 0.25);
`;

const MapType = styled.button`
  height: 70px;
  padding: 0 22px;
  border: 0;
  background: none;
  box-shadow: ${(p) => (p.$active ? "none" : "-2px 0 2px rgba(0, 0, 0, 0.08)")};
  color: ${(p) => (p.$active ? "#000" : "#565656")};
  font-size: 22px;
  font-weight: ${(p) => (p.$active ? 500 : 400)};
`;

const MapControls = styled.div`
  position: absolute;
  right: 20px;
  bottom: 48px;
  display: flex;
  flex-direction: column;
  gap: 20px;
`;

const Tile = styled.div`
  display: flex;
  flex-direction: column;
  align-items: center;
  width: 56px;
  border-radius: 4px;
  background: #fff;
  box-shadow: 0 2px 6px rgba(0, 0, 0, 0.25);
`;

const TileButton = styled.button`
  display: flex;
  align-items: center;
  justify-content: center;
  width: 100%;
  height: ${(p) => p.$height}px;
  padding: 0;
  border: 0;
  background: none;
`;

const TileRule = styled.hr`
  width: 38px;
  height: 2px;
  margin: 0;
  border: 0;
  background: #e6e6e6;
`;

const FullscreenButton = styled.button`
  position: absolute;
  top: 20px;
  right: 28px;
  display: flex;
  align-items: center;
  justify-content: center;
  width: 50px;
  height: 50px;
  padding: 0;
  border: 0;
  background: #fff;
`;

const Credits = styled.div`
  position: absolute;
  right: 0;
  bottom: 0;
  display: flex;
  gap: 2px;
  color: #444;
  font-size: 20px;
  line-height: 28px;

  span, a {
    padding: 0 11px;
    background: rgba(245, 245, 245, 0.7);
    color: inherit;
    text-decoration: none;
  }
`;

const GoogleMark = styled.a`
  position: absolute;
  bottom: 4px;
  left: 12px;
  font-family: Lato, "Liberation Sans", sans-serif;
  font-size: 40px;
  font-weight: 500;
  line-height: 48px;
  text-decoration: none;
  text-shadow: 0 0 3px #fff, 0 0 3px #fff, 2px 2px 2px #e9f5fe, -2px -2px 2px #e9f5fe, 2px -2px 2px #e9f5fe, -2px 2px 2px #e9f5fe;
`;

const Letter = styled.span`
  color: ${(p) => p.$tint};
`;

const GOOGLE = [["G", "#4285f4"], ["o", "#ea4335"], ["o", "#fbbc05"], ["g", "#4285f4"], ["l", "#34a853"], ["e", "#ea4335"]];

const WorldMap = () => (
  <MapFrame aria-label="Mapa">
    <MapCanvas>
      <Terrain />
      {LABELS.map(([text, x, y]) => <MapLabel key={text} style={place(x, y)}>{text}</MapLabel>)}
      {OCEANS.map(([text, x, y]) => <MapLabel key={text} $ocean style={place(x, y)}>{text}</MapLabel>)}
      {PINS.map(([x, y]) => (
        <Pin key={`${x}-${y}`} type="button" aria-label="Localización" style={place(x, y)}><PinSvg /></Pin>
      ))}
    </MapCanvas>
    <MapTypes>
      <MapType type="button" $active>Mapa</MapType>
      <MapType type="button">Satélite</MapType>
    </MapTypes>
    <FullscreenButton type="button" aria-label="Pantalla completa">
      <svg width="30" height="30" viewBox="0 0 30 30" fill="none" stroke="#666" strokeWidth="4">
        <path d="M2 10V2H10M20 2H28V10M28 20V28H20M10 28H2V20" />
      </svg>
    </FullscreenButton>
    <MapControls>
      <Tile>
        <TileButton type="button" aria-label="Street View" $height={56}>
          <svg width="24" height="40" viewBox="0 0 24 40" fill="#fbb829" stroke="#7d5f2c" strokeWidth="1">
            <path d="M6.500 13 H17.500 L22.500 28 L19.500 29.500 L17 24 V39 H12.500 V29 H11.500 V39 H7 V24 L4.500 29.500 L1.500 28 Z" />
            <path d="M8 14 H16 L12 21 Z" fill="#e58a1f" stroke="none" />
            <circle cx="12" cy="7.500" r="6.500" />
          </svg>
        </TileButton>
      </Tile>
      <Tile>
        <TileButton type="button" aria-label="Acercar" $height={54}>
          <svg width="22" height="22" viewBox="0 0 22 22" stroke="#666" strokeWidth="6"><path d="M0 11H22M11 0V22" /></svg>
        </TileButton>
        <TileRule />
        <TileButton type="button" aria-label="Alejar" $height={54}>
          <svg width="22" height="22" viewBox="0 0 22 22" stroke="#666" strokeWidth="6"><path d="M0 11H22" /></svg>
        </TileButton>
      </Tile>
    </MapControls>
    <GoogleMark href="#google" aria-label="Google">
      {GOOGLE.map(([char, tint], i) => <Letter key={i} $tint={tint}>{char}</Letter>)}
    </GoogleMark>
    <Credits>
      <span>Datos de mapas ©2018</span>
      <a href="#terminos">Términos de uso</a>
    </Credits>
  </MapFrame>
);

/* ---------- footer ---------- */

const Footer = styled.footer`
  display: flex;
  flex-direction: column;
  align-items: center;
  padding: 32px 60px;
  background: ${color.dark};
  color: #fff;
  text-align: center;
`;

const FooterLink = styled.a`
  color: ${color.info};
  font-weight: ${(p) => (p.$strong ? 700 : 400)};
  text-decoration: none;
`;

const LikeRow = styled.div`
  display: flex;
  align-items: center;
  gap: 32px;
  margin: 48px 0;
`;

const LikeButton = styled.button`
  display: flex;
  align-items: center;
  gap: 29px;
  width: 144px;
  height: 70px;
  padding: 0 24px;
  border: 2px solid ${color.info};
  border-radius: 8px;
  background: none;
  color: ${color.info};
  font-size: 24px;
  font-weight: 700;
`;

const SocialLink = styled.a`
  display: flex;
  align-items: center;
  justify-content: center;
  width: 72px;
  height: 60px;
  border: 2px solid ${color.info};
  border-radius: 8px;
  color: ${color.info};
`;

const FooterLinks = styled.div`
  display: flex;
  flex-direction: column;
  align-self: stretch;
  align-items: flex-end;
`;

export default function App() {
  return (
    <>
      <GlobalStyle />
      <Header>
        <Brand href="#inicio"><Logo /><span>Cambio Climático</span></Brand>
        <Nav>
          <NavLink href="#localizaciones" $active>Localizaciones</NavLink>
          <NavLink href="#paises">Países</NavLink>
          <NavLink href="#global">Global</NavLink>
        </Nav>
        <HeaderActions>
          <HeaderAction href="#usuario" aria-label="Usuario"><Icon d={ICONS.user} size={43} /></HeaderAction>
          <HeaderAction href="#contacto" aria-label="Contacto"><Icon d={ICONS.mail} size={43} /></HeaderAction>
        </HeaderActions>
      </Header>

      <Main>
        <Alert role="alert">
          La geolocalización está desactivada.<br />
          <b>Consejo:</b> Busque localizaciones usando la <b>Barra de búsqueda</b>, o active la{" "}
          <b>geolocalización</b> presionando el botón{" "}
          <InlineBadge><Icon d={ICONS.arrow} size={28} /></InlineBadge> .
        </Alert>

        <Toolbar>
          <ToolbarButtons>
            <ToolButton type="button" aria-label="Ver el mundo" $width={80}><FaGlobeAmericas size={28} /></ToolButton>
            <ToolButton type="button" aria-label="Mapa" $width={88} $filled><MapIcon /></ToolButton>
            <ToolButton type="button" aria-label="Geolocalización" $width={78}><Icon d={ICONS.arrow} size={32} /></ToolButton>
          </ToolbarButtons>
          <SearchForm role="search" onSubmit={(e) => e.preventDefault()}>
            <SearchInput type="text" placeholder="Cualquier Lugar" aria-label="Cualquier Lugar" />
            <SearchButton type="submit" aria-label="Buscar"><Icon d={ICONS.search} size={32} /></SearchButton>
          </SearchForm>
        </Toolbar>

        <WorldMap />

        <Alert $narrow>Una vez haya seleccionado una localización, aquí aparecerá más información.</Alert>
      </Main>

      <Footer>
        <p>© Universidad de A Coruña, <b>2018</b>.</p>
        <p>Este es el Trabajo de Fin de Grado <b>(TFG)</b> de <FooterLink href="#autor" $strong>Diego Hermida Carrera.</FooterLink></p>
        <LikeRow>
          <p><em>Me gusta</em> esta app</p>
          <LikeButton type="button" aria-label="Me gusta, 4"><FaThumbsUp size={38} />4</LikeButton>
        </LikeRow>
        <SocialLink href="#linkedin" aria-label="LinkedIn"><Icon d={ICONS.linkedin} size={42} /></SocialLink>
        <FooterLinks>
          <FooterLink href="#administracion">Administración</FooterLink>
          <FooterLink href="#localizaciones-monitorizadas">Listar todas las localizaciones monitorizadas</FooterLink>
        </FooterLinks>
      </Footer>
    </>
  );
}
